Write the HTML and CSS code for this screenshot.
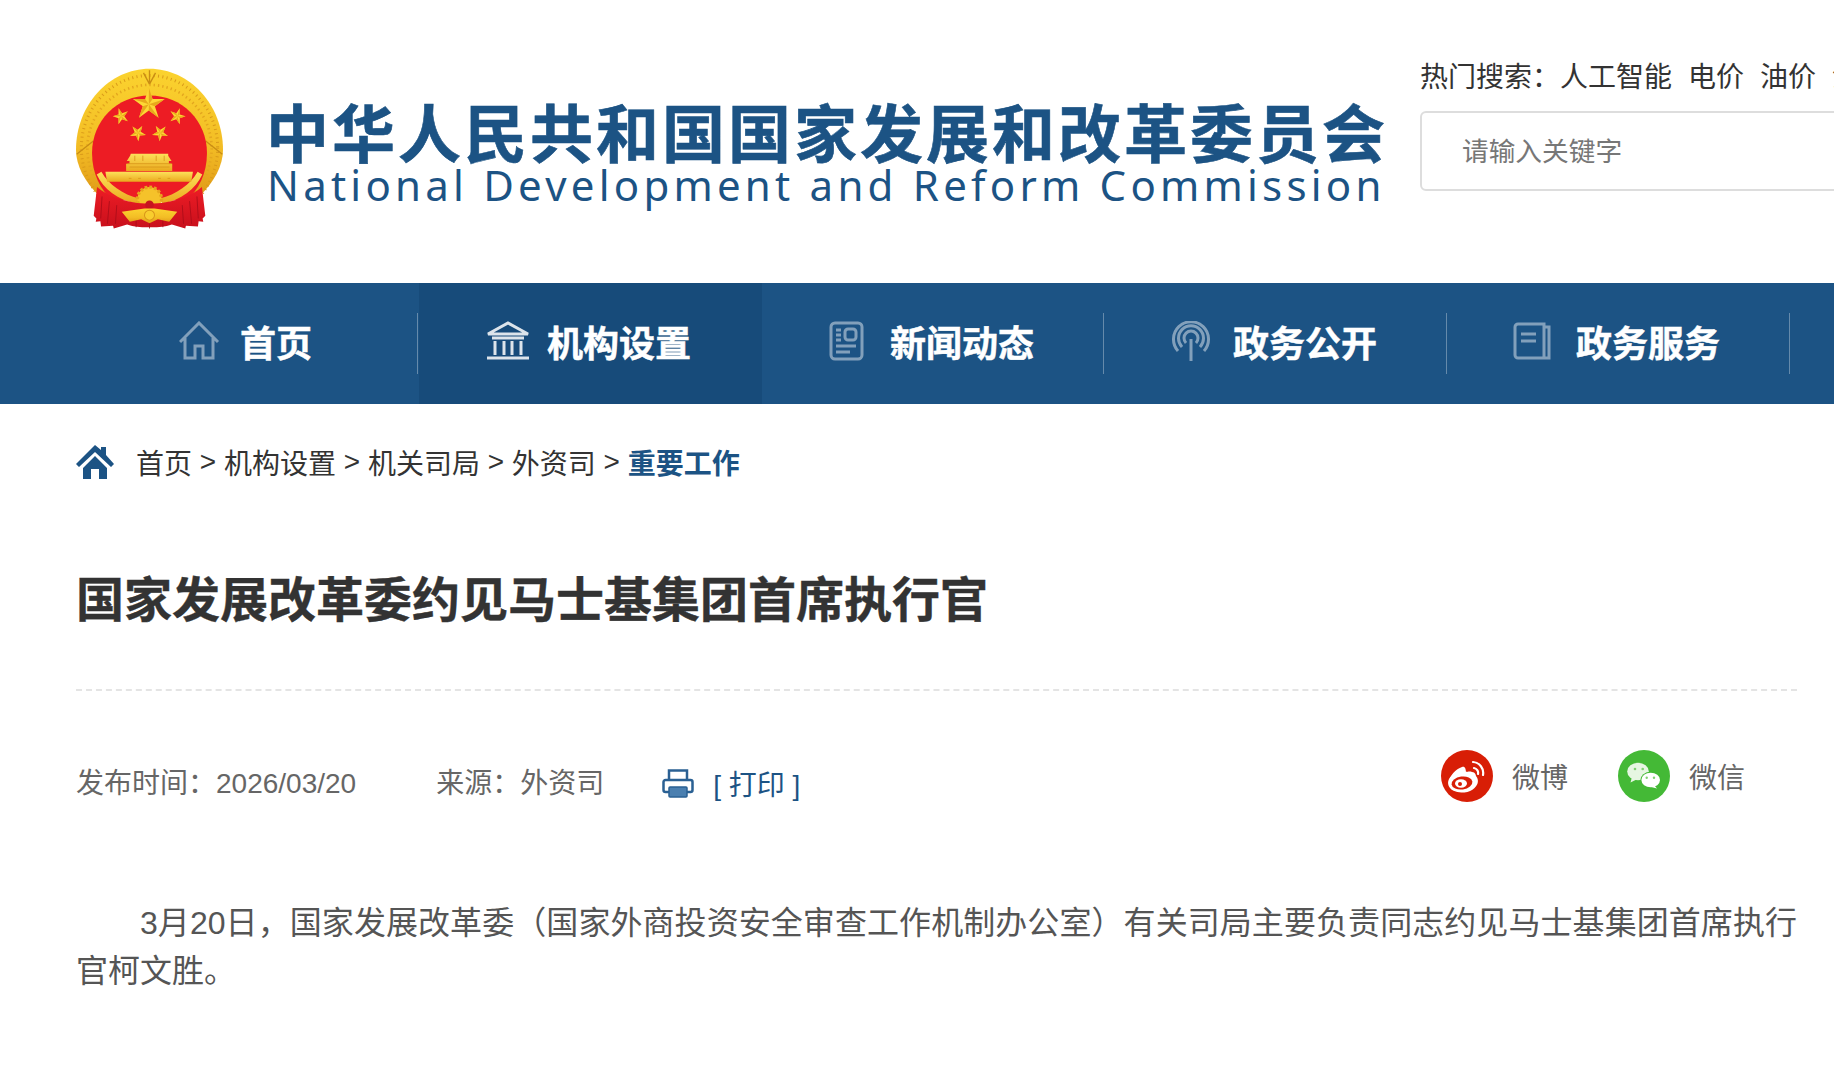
FILE: index.html
```html
<!DOCTYPE html>
<html lang="zh-CN">
<head>
  <meta charset="UTF-8">
  <meta name="viewport" content="width=device-width, initial-scale=1.0">
  <title>国家发展改革委约见马士基集团首席执行官</title>
  <link rel="stylesheet" href="styles.css">
</head>
<body>
  <header class="header">
    <!-- national emblem -->
    <svg class="emblem" viewBox="50 40 440 484" aria-hidden="true">
      <defs>
        <linearGradient id="gold" x1="0" y1="0" x2="0" y2="1">
          <stop offset="0" stop-color="#fbd32f"/>
          <stop offset="0.6" stop-color="#f3bd25"/>
          <stop offset="1" stop-color="#e09a18"/>
        </linearGradient>
        <linearGradient id="gold2" x1="0" y1="0" x2="0" y2="1">
          <stop offset="0" stop-color="#fde15a"/>
          <stop offset="1" stop-color="#eaa91d"/>
        </linearGradient>
        <linearGradient id="ribbon" x1="0" y1="0" x2="0" y2="1">
          <stop offset="0" stop-color="#ee1c25"/>
          <stop offset="1" stop-color="#c8101c"/>
        </linearGradient>
        <g id="star">
          <polygon fill="#fdd835" points="0,-100 22.4,-30.9 95.1,-30.9 36.3,11.8 58.8,80.9 0,38 -58.8,80.9 -36.3,11.8 -95.1,-30.9 -22.4,-30.9"/>
          <polygon fill="#e8a91c" points="0,-100 22.4,-30.9 0,0"/>
          <polygon fill="#e8a91c" points="95.1,-30.9 36.3,11.8 0,0"/>
          <polygon fill="#e8a91c" points="58.8,80.9 0,38 0,0"/>
          <polygon fill="#e8a91c" points="-58.8,80.9 -36.3,11.8 0,0"/>
          <polygon fill="#e8a91c" points="-95.1,-30.9 -22.4,-30.9 0,0"/>
        </g>
      </defs>
      <!-- wreath -->
      <path fill="url(#gold)" d="M270 42C150 42 50 150 50 285c0 45 25 95 72 140l296 0c47-45 72-95 72-140C490 150 390 42 270 42z"/>
      <ellipse cx="270" cy="278" rx="204" ry="216" fill="none" stroke="#d99a1a" stroke-width="9" stroke-dasharray="3 10"/>
      <ellipse cx="270" cy="280" rx="186" ry="190" fill="none" stroke="#e3a61f" stroke-width="8" stroke-dasharray="4 9"/>
      <path fill="none" stroke="#c98d14" stroke-width="4" d="M270 46v42M270 88l-18-34M270 88l18-34"/>
      <path fill="none" stroke="#c98d14" stroke-width="4" d="M52 298l50-40M488 298l-50-40"/>
      <!-- red field -->
      <path fill="#ed1c24" d="M270 122c98 0 172 76 172 172 0 62-25 110-62 142H160c-37-32-62-80-62-142 0-96 74-172 172-172z"/>
      <!-- stars -->
      <use href="#star" transform="translate(268 148) scale(.5)"/>
      <use href="#star" transform="translate(185 184) rotate(-18) scale(.25)"/>
      <use href="#star" transform="translate(353 184) rotate(18) scale(.25)"/>
      <use href="#star" transform="translate(235 234) rotate(-40) scale(.25)"/>
      <use href="#star" transform="translate(302 234) rotate(40) scale(.25)"/>
      <!-- gold strips beside the field -->
      <path fill="url(#gold2)" d="M112 358l14-8c22 38 62 68 114 80l-8 16C176 434 132 402 112 358z"/>
      <path fill="url(#gold2)" d="M428 358l-14-8c-22 38-62 68-114 80l8 16C364 434 408 402 428 358z"/>
      <!-- gate -->
      <path fill="url(#gold2)" d="M214 296h112v6l10 16h-8v8h10v22h-138v-22h10v-8h-8l10-16z"/>
      <path fill="url(#gold2)" d="M138 350h262l-5 30H143z"/>
      <path fill="none" stroke="#d9961a" stroke-width="2.5" d="M204 326h132M210 336h120M226 302v16M250 302v16M290 302v16M314 302v16M208 370h8M236 370h8M296 370h8M324 370h8"/>
      <!-- gear -->
      <circle cx="270" cy="432" r="36" fill="#f5c22a" stroke="#e5a71d" stroke-width="10" stroke-dasharray="8 6"/>
      <!-- ribbon -->
      <path fill="url(#ribbon)" d="M113 396c30 26 90 50 157 50s127-24 157-50l10 86-8 8 2 10-14-2-2 16-36-2-2 8-40-12c-20 8-40 8-60 8h-14c-20 0-40 0-60-8l-40 12-2-8-36 2-2-16-14 2 2-10-8-8z"/>
      <path fill="none" stroke="#a90c18" stroke-width="2.5" d="M128 424l-4 66M150 438l-6 68M172 450l-4 56M368 450l4 56M390 438l6 68M412 424l4 66M230 480v36M270 490v30M310 480v36"/>
      <circle cx="270" cy="449" r="13" fill="#c8151f"/>
      <path fill="url(#gold)" d="M255 460h30l68 10-24 30-34-8-25 12-25-12-34 8-24-30z"/>
      <circle cx="270" cy="480" r="15" fill="#f8cd2e" stroke="#d8951a" stroke-width="3"/>
    </svg>

    <div class="logo-text">
      <div class="logo-cn">中华人民共和国国家发展和改革委员会</div>
      <div class="logo-en">National Development and Reform Commission</div>
    </div>

    <div class="search-col">
      <div class="hot-words">
        <span>热门搜索&#xFF1A;</span>
        <a class="hot-first" href="#">人工智能</a>
        <a href="#">电价</a>
        <a href="#">油价</a>
        <a href="#">汽油</a>
      </div>
      <div class="search-box">请输入关键字</div>
    </div>
  </header>

  <nav class="nav">
    <a class="nav-item" href="#">
      <svg class="nav-icon" viewBox="0 0 44 40"><path d="M1 21L20 2l19 19M6 17v20h10V25h8v12h10V17"/></svg>
      <span>首页</span>
    </a>
    <a class="nav-item active" href="#">
      <svg class="nav-icon" viewBox="0 0 44 40"><path d="M2 13L22 2l20 11zM6 17h32M9 20v14M18 20v14M26 20v14M35 20v14M1 37h42"/></svg>
      <span>机构设置</span>
    </a>
    <a class="nav-item" href="#">
      <svg class="nav-icon" viewBox="0 0 44 40"><rect x="2" y="2" width="31" height="36" rx="4"/><rect x="16" y="8" width="11" height="11" rx="3"/><path d="M7 9h5M7 14h5M7 19h5M7 25h20M7 31h14"/></svg>
      <span>新闻动态</span>
    </a>
    <a class="nav-item" href="#">
      <svg class="nav-icon" viewBox="0 0 44 40"><path d="M19 40V18M6 30a17.500 17.500 0 1 1 26 0M10 26a12.500 12.500 0 1 1 18 0M14 22a7 7 0 1 1 10 0"/></svg>
      <span>政务公开</span>
    </a>
    <a class="nav-item" href="#">
      <svg class="nav-icon nav-icon-shift" viewBox="0 0 44 40"><path d="M33 3H7a3 3 0 0 0-3 3v28a3 3 0 0 0 3 3h26zM33 6h5v31h-5M10 13h15M10 20h15"/></svg>
      <span>政务服务</span>
    </a>
  </nav>

  <main class="content">
    <div class="crumbs">
      <svg class="crumb-home" viewBox="0 0 38 34"><path d="M19 0l6 5V2h5v8l8 9-3 3L19 7 3 22l-3-3zM7 23L19 11l12 12v11H23V24h-8v10H7z"/></svg>
      <a href="#">首页</a> &gt; <a href="#">机构设置</a> &gt; <a href="#">机关司局</a> &gt; <a href="#">外资司</a> &gt; <a class="crumb-current" href="#">重要工作</a>
    </div>

    <h1 class="title">国家发展改革委约见马士基集团首席执行官</h1>

    <div class="meta">
      <span>发布时间&#xFF1A;2026/03/20</span>
      <span class="meta-source">来源&#xFF1A;外资司</span>
      <a class="print" href="#">
        <svg class="print-icon" viewBox="0 0 32 30"><path class="print-line" d="M7 12V2.500h18V12M7 24H3.500A2 2 0 0 1 1.500 22V14a2 2 0 0 1 2-2h25a2 2 0 0 1 2 2v8a2 2 0 0 1-2 2H25"/><rect class="print-fill" x="7" y="19" width="18" height="10" rx="1"/></svg>
        <span>[ 打印 ]</span>
      </a>
      <div class="share">
        <a class="share-item" href="#">
          <svg class="share-icon" viewBox="0 0 52 52">
            <circle cx="26" cy="26" r="26" fill="#d81e06"/>
            <path fill="#fff" d="M21 17c-6 2-13 9-13 15l26-3c2-4 0-7-3-7-3-1-5 0-6 1 0-4-1-7-4-6z"/>
            <ellipse cx="22" cy="32" rx="15" ry="10.500" fill="#fff" transform="rotate(-8 22 32)"/>
            <ellipse cx="21" cy="33" rx="10.500" ry="6.500" fill="#d81e06" transform="rotate(-8 21 33)"/>
            <ellipse cx="20" cy="33.500" rx="6" ry="4.200" fill="#fff"/>
            <circle cx="19" cy="34" r="2" fill="#d81e06"/>
            <path fill="none" stroke="#fff" stroke-width="2.200" stroke-linecap="round" d="M32 12a11 11 0 0 1 10 13M33 18a5 5 0 0 1 4 6"/>
          </svg>
          <span>微博</span>
        </a>
        <a class="share-item" href="#">
          <svg class="share-icon" viewBox="0 0 52 52">
            <circle cx="26" cy="26" r="26" fill="#44b936"/>
            <ellipse cx="20" cy="21.500" rx="10.800" ry="8.800" fill="#e6f6e2"/>
            <path fill="#e6f6e2" d="M14 27l-1.500 5.500 6-3z"/>
            <circle cx="17" cy="19" r="1.300" fill="#7fd071"/>
            <circle cx="24.700" cy="19" r="1.300" fill="#7fd071"/>
            <ellipse cx="32.700" cy="30" rx="10.300" ry="8.300" fill="#44b936"/>
            <ellipse cx="32.700" cy="30" rx="9.300" ry="7.300" fill="#fff"/>
            <path fill="#fff" d="M36 35l3 3.500-6-1.500z"/>
            <circle cx="28.700" cy="27.700" r="1.200" fill="#7fd071"/>
            <circle cx="36" cy="27.700" r="1.200" fill="#7fd071"/>
          </svg>
          <span>微信</span>
        </a>
      </div>
    </div>

    <p class="body-text">3月20日&#xFF0C;国家发展改革委&#xFF08;国家外商投资安全审查工作机制办公室&#xFF09;有关司局主要负责同志约见马士基集团首席执行官柯文胜。</p>
  </main>
</body>
</html>
```
FILE: styles.css
```css
body {
  margin: 0;
  font-family: "Liberation Sans", "Noto Sans CJK SC", sans-serif;
  color: #333;
  background: #fff;
  overflow-x: hidden;
}
a {
  color: inherit;
  text-decoration: none;
}

/* header */
.header {
  display: flex;
  align-items: flex-start;
  height: 283px;
  padding-left: 76px;
  overflow: hidden;
}
.emblem {
  flex: none;
  width: 147px;
  height: 162px;
  margin-top: 68px;
}
.logo-text {
  flex: none;
  width: 1154px;
  margin: 97px 0 0 43px;
  color: #1c5384;
}
.logo-cn {
  font-family: "Noto Sans CJK SC", sans-serif;
  font-size: 63px;
  font-weight: 700;
  line-height: 66px;
  letter-spacing: 3px;
  white-space: nowrap;
  -webkit-text-stroke: 0.6px #1c5384;
}
.logo-en {
  font-family: "Noto Sans", sans-serif;
  font-size: 42px;
  line-height: 44px;
  letter-spacing: 4.23px;
  margin-left: 1px;
  white-space: nowrap;
}
.search-col {
  flex: none;
  width: 560px;
  padding-top: 58px;
}
.hot-words {
  display: flex;
  gap: 16px;
  font-size: 28px;
  line-height: 40px;
  white-space: nowrap;
}
.hot-first {
  margin-left: -16px;
}
.search-box {
  box-sizing: border-box;
  height: 80px;
  margin-top: 13px;
  padding-left: 40px;
  border: 2px solid #ddd;
  border-radius: 6px;
  font-size: 26.7px;
  line-height: 78px;
  color: #777;
}

/* nav */
.nav {
  display: flex;
  height: 121px;
  padding-left: 76px;
  background: #1c5384;
  overflow: hidden;
}
.nav-item {
  position: relative;
  flex: none;
  box-sizing: border-box;
  width: 343px;
  padding: 0 4px 5px 0;
  display: flex;
  align-items: center;
  justify-content: center;
  gap: 17px;
  font-size: 36px;
  font-weight: 700;
  color: #fff;
  -webkit-text-stroke: 0.5px #fff;
}
.nav-item::after {
  content: "";
  position: absolute;
  right: 1px;
  top: 30px;
  bottom: 30px;
  width: 1px;
  background: rgba(255, 255, 255, 0.32);
}
.nav-item.active {
  background: #174b7a;
}
.nav-item.active::after {
  display: none;
}
.nav-icon {
  flex: none;
  width: 44px;
  height: 40px;
  fill: none;
  stroke: #fff;
  stroke-width: 3;
  opacity: 0.45;
}
.nav-icon-shift {
  margin-left: -4px;
  margin-right: 4px;
}
.active .nav-icon {
  opacity: 0.85;
}

/* breadcrumb */
.content {
  padding: 0 37px 0 76px;
}
.crumbs {
  display: flex;
  align-items: center;
  height: 115px;
  padding-bottom: 3px;
  font-size: 28px;
  white-space: pre-wrap;
}
.crumb-home {
  width: 38px;
  height: 34px;
  margin-right: 22px;
  fill: #1c5384;
}
.crumb-current {
  font-weight: 700;
  color: #1c5384;
}

/* article */
.title {
  margin: 51px 0 0;
  padding-bottom: 60px;
  border-bottom: 2px dashed #e4e4e4;
  font-size: 48px;
  line-height: 56px;
  font-weight: 700;
  -webkit-text-stroke: 0.4px #333;
}
.meta {
  display: flex;
  align-items: center;
  height: 60px;
  margin-top: 60px;
  font-size: 28px;
  color: #666;
}
.meta-source {
  margin-left: 80px;
}
.print {
  display: flex;
  align-items: center;
  gap: 19px;
  margin: 4px 0 0 58px;
  color: #1c5384;
}
.print-icon {
  width: 32px;
  height: 30px;
}
.print-line {
  fill: none;
  stroke: #2a6093;
  stroke-width: 2.5;
}
.print-fill {
  fill: #4a7fb0;
  stroke: #2a6093;
  stroke-width: 1.5;
}
.share {
  display: flex;
  gap: 50px;
  margin: -10px 52px 0 auto;
}
.share-item {
  display: flex;
  align-items: center;
  gap: 19px;
}
.share-icon {
  width: 52px;
  height: 52px;
}
.body-text {
  margin: 88px 0 0;
  font-size: 32px;
  line-height: 48px;
  text-indent: 2em;
  text-align: justify;
  color: #555;
}
```
